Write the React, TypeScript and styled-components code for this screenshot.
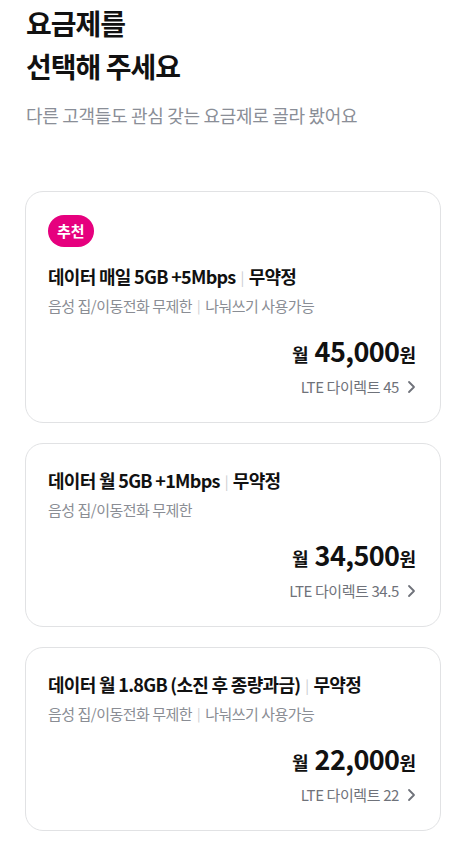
import React from "react";
import styled, { createGlobalStyle } from "styled-components";

type Plan = {
  badge?: string;
  data: string;
  contract: string;
  voice: string;
  share?: string;
  price: string;
  name: string;
};

const plans: Plan[] = [
  {
    badge: "추천",
    data: "데이터 매일 5GB +5Mbps",
    contract: "무약정",
    voice: "음성 집/이동전화 무제한",
    share: "나눠쓰기 사용가능",
    price: "45,000",
    name: "LTE 다이렉트 45",
  },
  {
    data: "데이터 월 5GB +1Mbps",
    contract: "무약정",
    voice: "음성 집/이동전화 무제한",
    price: "34,500",
    name: "LTE 다이렉트 34.5",
  },
  {
    data: "데이터 월 1.8GB (소진 후 종량과금)",
    contract: "무약정",
    voice: "음성 집/이동전화 무제한",
    share: "나눠쓰기 사용가능",
    price: "22,000",
    name: "LTE 다이렉트 22",
  },
];

const Chevron = () => (
  <svg width="9" height="14" viewBox="0 0 9 14" fill="none">
    <path
      d="M2 2l5 5-5 5"
      stroke="#6f727a"
      strokeWidth="1.8"
      strokeLinecap="round"
      strokeLinejoin="round"
    />
  </svg>
);

const PlanCard: React.FC<{ plan: Plan }> = ({ plan }) => (
  <Card>
    {plan.badge && <Badge>{plan.badge}</Badge>}
    <PlanTitle>
      {plan.data}
      <Divider $size={14}>|</Divider>
      {plan.contract}
    </PlanTitle>
    <PlanInfo>
      {plan.voice}
      {plan.share && (
        <>
          <Divider $size={13}>|</Divider>
          {plan.share}
        </>
      )}
    </PlanInfo>
    <PriceRow>
      <Unit>월</Unit>
      <Amount>{plan.price}</Amount>
      <Unit $tight>원</Unit>
    </PriceRow>
    <LinkRow>
      {plan.name}
      <Chevron />
    </LinkRow>
  </Card>
);

export default function App() {
  return (
    <>
      <GlobalStyle />
      <Page>
        <Header>
          <Heading>
            요금제를
            <br />
            선택해 주세요
          </Heading>
          <Lead>다른 고객들도 관심 갖는 요금제로 골라 봤어요</Lead>
        </Header>
        <List>
          {plans.map((p) => (
            <PlanCard key={p.name} plan={p} />
          ))}
        </List>
      </Page>
    </>
  );
}

const GlobalStyle = createGlobalStyle`
  body {
    margin: 0;
    background: #ffffff;
    font-family: "Noto Sans CJK KR", "Noto Sans", sans-serif;
    color: #111111;
  }
`;

const Page = styled.div`
  width: 466px;
  padding: 2px 25px 0 25px;
  box-sizing: border-box;
`;

const Header = styled.div`
  padding-left: 1px;
`;

const Heading = styled.h1`
  margin: 0;
  font-size: 28px;
  line-height: 43px;
  font-weight: 700;
  letter-spacing: -1px;
  color: #111111;
`;

const Lead = styled.p`
  margin: 15px 0 0;
  font-size: 18px;
  line-height: 24px;
  letter-spacing: -0.3px;
  color: #8a8e97;
`;

const List = styled.div`
  display: flex;
  flex-direction: column;
  gap: 20px;
  margin-top: 64px;
`;

const Card = styled.div`
  border: 1px solid #e1e2e4;
  border-radius: 18px;
  padding: 23px 24px 24px 22px;
  display: flex;
  flex-direction: column;
  align-items: flex-start;
`;

const Badge = styled.span`
  height: 32px;
  padding: 0 9px;
  border-radius: 16px;
  background: #e6007e;
  color: #ffffff;
  font-size: 15px;
  font-weight: 700;
  line-height: 32px;
  margin-bottom: 16px;
`;

const PlanTitle = styled.div`
  font-size: 18px;
  line-height: 26px;
  font-weight: 700;
  letter-spacing: -0.7px;
  color: #111111;
  white-space: nowrap;
`;

const Divider = styled.span<{ $size: number }>`
  display: inline-block;
  margin: 0 5px;
  font-size: ${(p) => p.$size}px;
  font-weight: 400;
  color: #c9cbcf;
  vertical-align: 1px;
`;

const PlanInfo = styled.div`
  margin-top: 5px;
  font-size: 15px;
  line-height: 22px;
  letter-spacing: -0.5px;
  color: #8a8d94;
  white-space: nowrap;
`;

const PriceRow = styled.div`
  align-self: flex-end;
  display: flex;
  align-items: baseline;
  margin-top: 17px;
  height: 34px;
  line-height: 34px;
  color: #111111;
`;

const Unit = styled.span<{ $tight?: boolean }>`
  font-size: 18px;
  font-weight: 700;
  margin-right: ${(p) => (p.$tight ? "0" : "6px")};
`;

const Amount = styled.span`
  font-size: 27px;
  font-weight: 700;
  letter-spacing: -0.6px;
`;

const LinkRow = styled.div`
  align-self: flex-end;
  display: flex;
  align-items: center;
  gap: 8px;
  margin-top: 8px;
  font-size: 15px;
  line-height: 22px;
  letter-spacing: -0.4px;
  color: #6f727a;
`;
